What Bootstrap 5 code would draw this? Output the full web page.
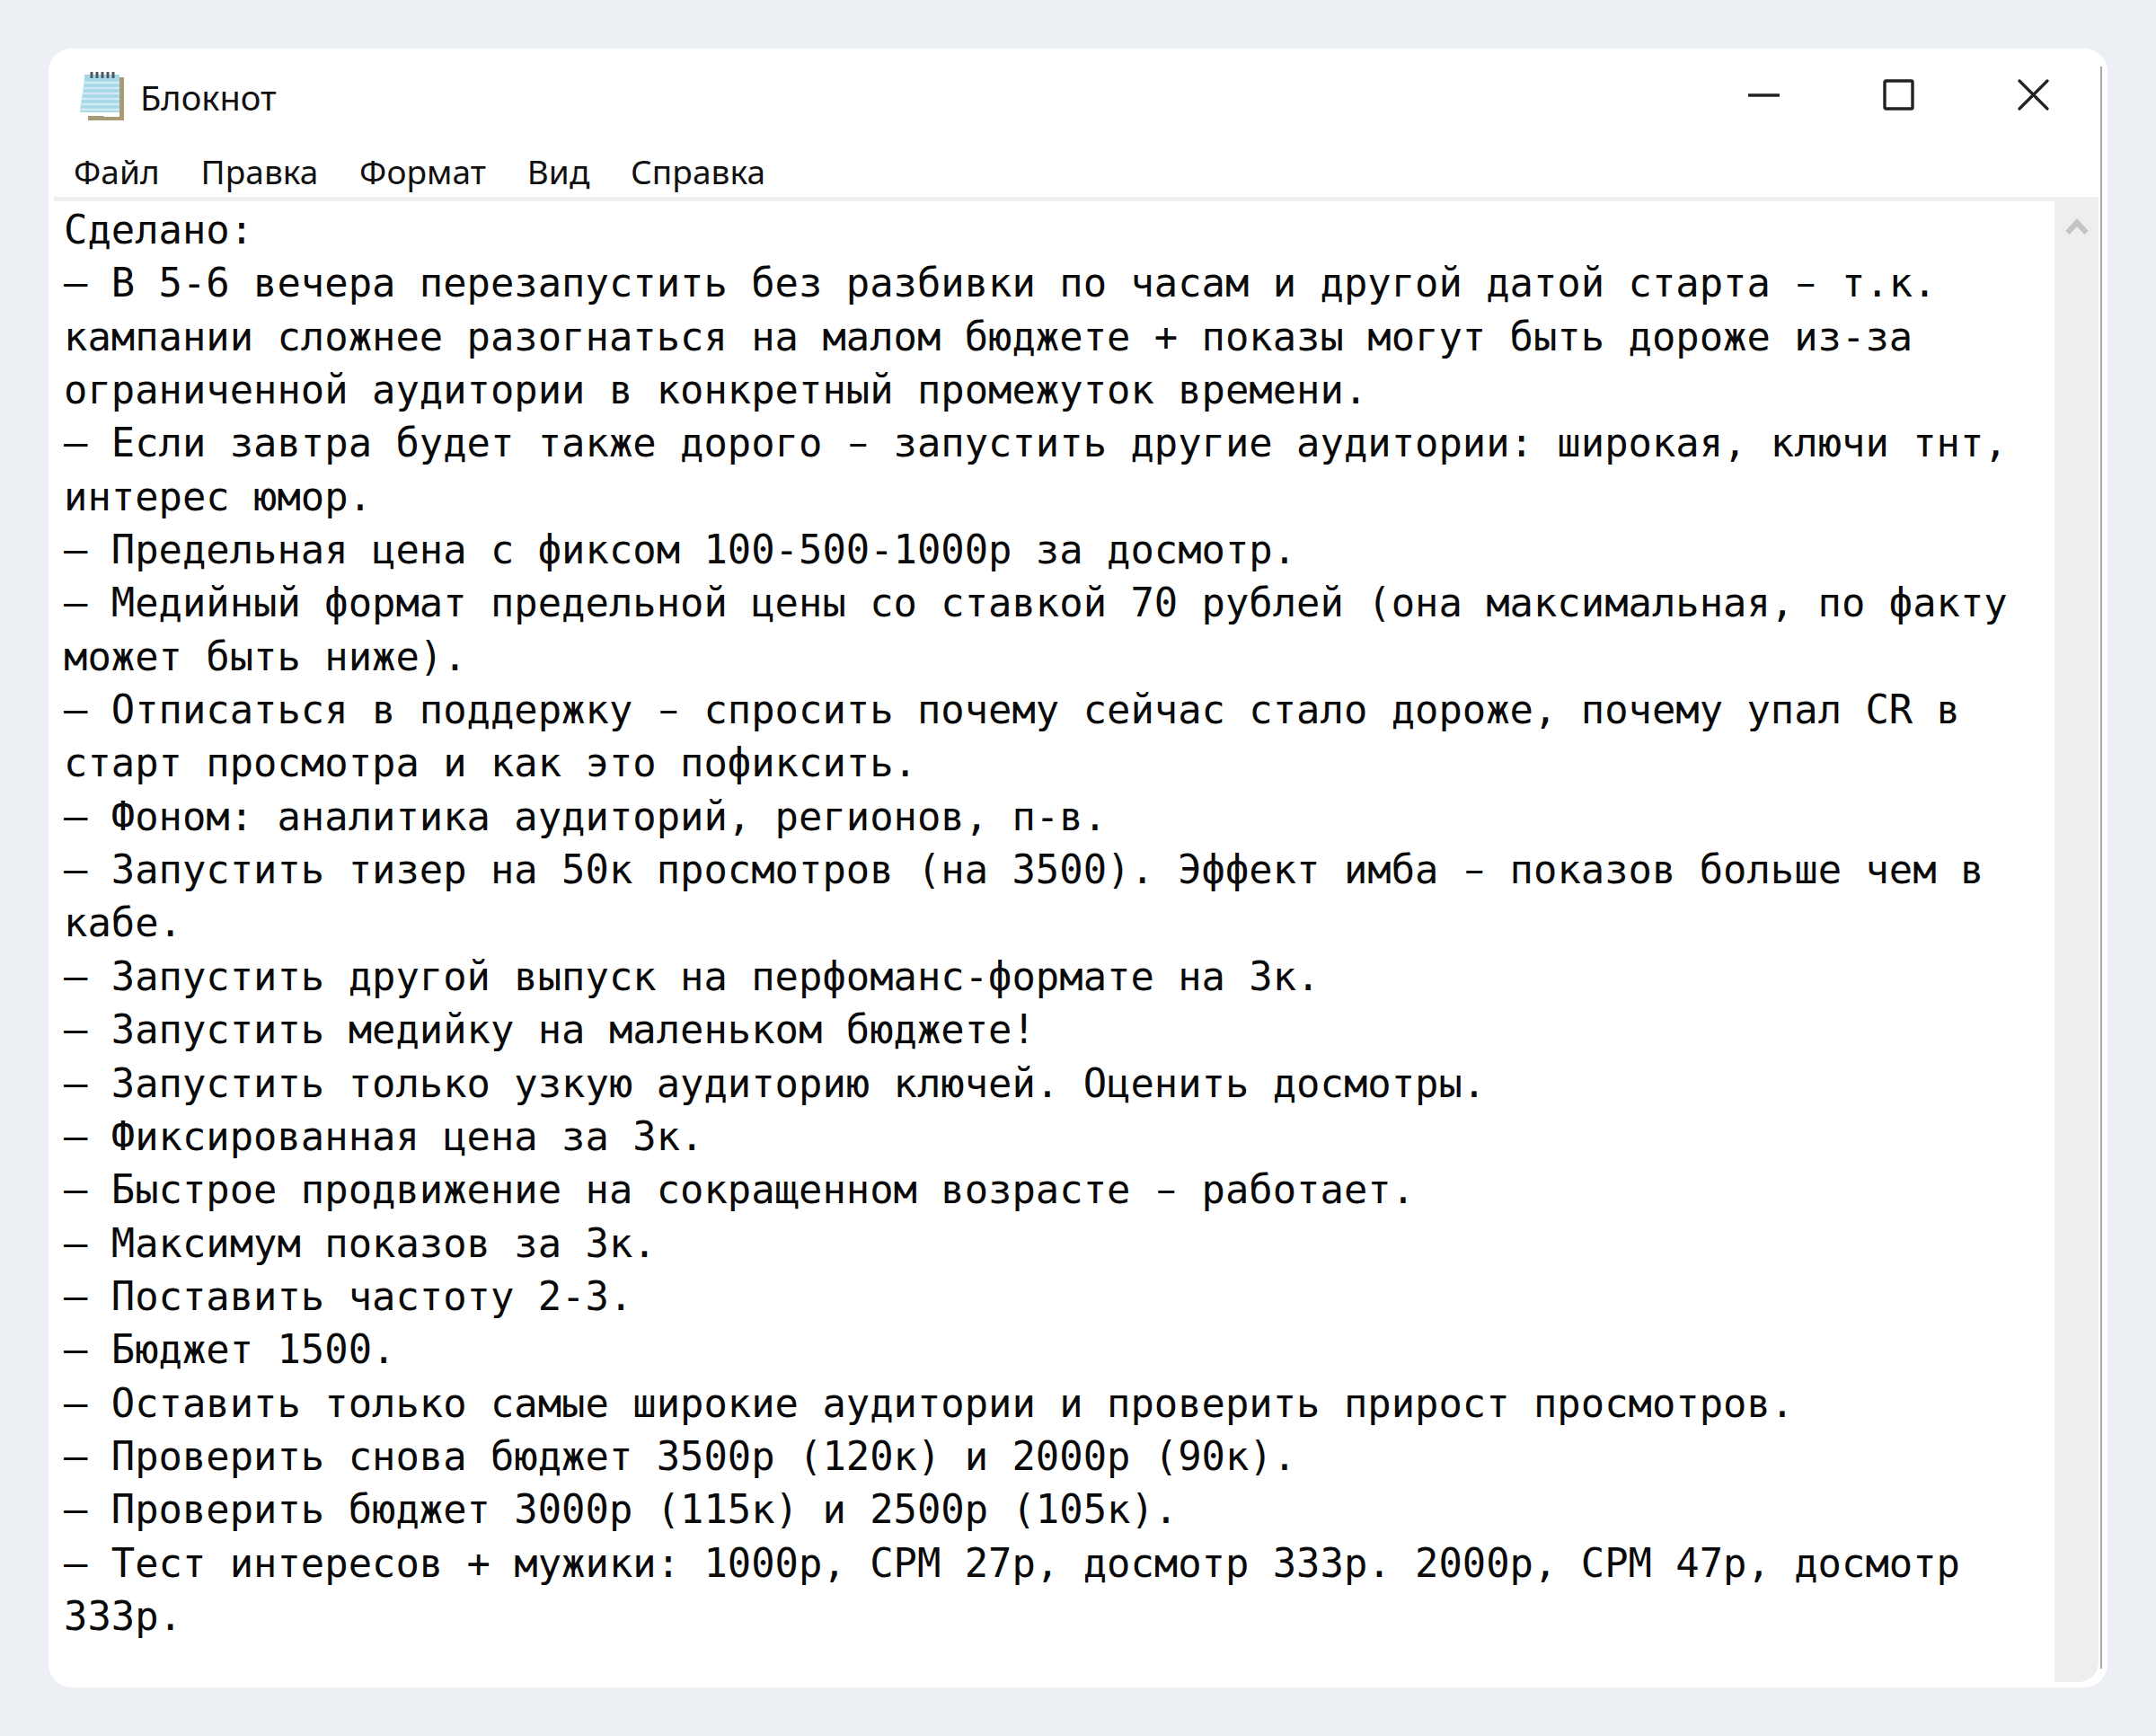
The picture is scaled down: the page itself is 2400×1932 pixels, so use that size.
<!DOCTYPE html>
<html lang="ru">
<head>
<meta charset="utf-8">
<title>Блокнот</title>
<link href="https://cdn.jsdelivr.net/npm/bootstrap@5.3.0/dist/css/bootstrap.min.css" rel="stylesheet">
<style>
html,body{height:100%;}
body.desk{background:#eceff4;padding:54px;font-family:"Noto Sans","Open Sans",sans-serif;color:#111;overflow:hidden;}
.win{width:2292px;height:1824px;background:#fff;border-radius:26px;overflow:hidden;}
.titlerow{height:108px;padding-left:34px;padding-bottom:3px;}
.apptitle{font-size:38px;margin-left:18px;line-height:1;padding-top:2px;}
.wctl{padding-right:65px;gap:115px;padding-bottom:2px;}
.menurow{height:57px;padding-left:28px;gap:45.5px;font-size:37px;line-height:57px;letter-spacing:.1px;}
.bodyrow{flex:1 1 auto;min-height:0;margin:0 10px 6px 6px;border-top:5px solid #efefef;border-radius:0 0 22px 0;overflow:hidden;}
.notetext{flex:1 1 auto;padding:2px 0 0 11px;font-family:"DejaVu Sans Mono","Liberation Mono",monospace;font-size:43.84px;line-height:59.35px;color:#0a0a0a;overflow:hidden;}
.notetext>div{white-space:pre;}
.sbar{width:49px;background:#eeeeee;flex:none;padding-top:17px;}
.edge{width:2px;background:#a8a8a8;position:absolute;top:20px;bottom:21px;right:6px;}
.shortdash{display:inline-block;transform:scaleX(.68);}
</style>
</head>
<body class="desk">
<div class="win d-flex flex-column position-relative">
  <div class="titlerow d-flex align-items-center justify-content-between flex-shrink-0">
    <div class="d-flex align-items-center">
      <svg width="50" height="55" viewBox="0 0 50 55" aria-hidden="true">
        <path d="M10 50H50V7H45V50Z" fill="#a89a72"/>
        <path d="M10 50H50V55H10Z" fill="#a89a72"/>
        <path d="M6 4H45V48H26L24 46H1L3 30Q6 16 6 4Z" fill="#a5d8e6"/>
        <path d="M5 13H45M4 19H45M3.500 25H45M3 31H45M2.500 37H45M2 43H45" stroke="#cfeaf2" stroke-width="2.600"/>
        <path d="M24 46H45V51H28Z" fill="#fff"/>
        <path d="M14 1V8M20 1V8M26 1V8M32 1V8M38 1V8" stroke="#4f5a60" stroke-width="3"/>
      </svg>
      <span class="apptitle">Блокнот</span>
    </div>
    <div class="wctl d-flex align-items-center">
      <svg width="35" height="35" viewBox="0 0 35 35" aria-hidden="true"><path d="M1 18H34" stroke="#222" stroke-width="3.400" stroke-linecap="round"/></svg>
      <svg width="35" height="35" viewBox="0 0 35 35" aria-hidden="true"><rect x="2" y="2" width="31" height="31" rx="1.500" fill="none" stroke="#222" stroke-width="3.400"/></svg>
      <svg width="35" height="35" viewBox="0 0 35 35" aria-hidden="true"><path d="M2 2L33 33M33 2L2 33" stroke="#222" stroke-width="3.200" stroke-linecap="round"/></svg>
    </div>
  </div>
  <div class="menurow d-flex flex-shrink-0">
    <span>Файл</span><span>Правка</span><span>Формат</span><span>Вид</span><span>Справка</span>
  </div>
  <div class="bodyrow d-flex">
    <div class="notetext">
<div>Сделано:</div>
<div>— В 5-6 вечера перезапустить без разбивки по часам и другой датой старта <span class="shortdash">–</span> т.к.</div>
<div>кампании сложнее разогнаться на малом бюджете + показы могут быть дороже из-за</div>
<div>ограниченной аудитории в конкретный промежуток времени.</div>
<div>— Если завтра будет также дорого <span class="shortdash">–</span> запустить другие аудитории: широкая, ключи тнт,</div>
<div>интерес юмор.</div>
<div>— Предельная цена с фиксом 100-500-1000р за досмотр.</div>
<div>— Медийный формат предельной цены со ставкой 70 рублей (она максимальная, по факту</div>
<div>может быть ниже).</div>
<div>— Отписаться в поддержку <span class="shortdash">–</span> спросить почему сейчас стало дороже, почему упал CR в</div>
<div>старт просмотра и как это пофиксить.</div>
<div>— Фоном: аналитика аудиторий, регионов, п-в.</div>
<div>— Запустить тизер на 50к просмотров (на 3500). Эффект имба <span class="shortdash">–</span> показов больше чем в</div>
<div>кабе.</div>
<div>— Запустить другой выпуск на перфоманс-формате на 3к.</div>
<div>— Запустить медийку на маленьком бюджете!</div>
<div>— Запустить только узкую аудиторию ключей. Оценить досмотры.</div>
<div>— Фиксированная цена за 3к.</div>
<div>— Быстрое продвижение на сокращенном возрасте <span class="shortdash">–</span> работает.</div>
<div>— Максимум показов за 3к.</div>
<div>— Поставить частоту 2-3.</div>
<div>— Бюджет 1500.</div>
<div>— Оставить только самые широкие аудитории и проверить прирост просмотров.</div>
<div>— Проверить снова бюджет 3500р (120к) и 2000р (90к).</div>
<div>— Проверить бюджет 3000р (115к) и 2500р (105к).</div>
<div>— Тест интересов + мужики: 1000р, CPM 27р, досмотр 333р. 2000р, CPM 47р, досмотр</div>
<div>333р.</div>
    </div>
    <div class="sbar d-flex justify-content-center align-items-start">
      <svg width="26" height="22" viewBox="0 0 26 22" aria-hidden="true"><path d="M2.500 18L13 6.500L23.500 18" fill="none" stroke="#c4c4c4" stroke-width="6"/></svg>
    </div>
  </div>
  <div class="edge"></div>
</div>
<script src="https://cdn.jsdelivr.net/npm/bootstrap@5.3.0/dist/js/bootstrap.bundle.min.js"></script>
</body>
</html>
